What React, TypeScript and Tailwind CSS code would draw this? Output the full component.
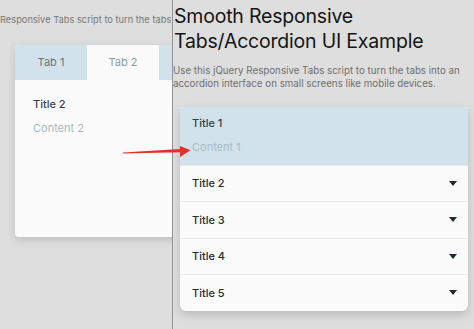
import { ReactNode } from 'react'

const font = { fontFamily: 'Inter, "Noto Sans", sans-serif' }

function Caret() {
  return (
    <svg width="8" height="5" viewBox="0 0 8 5" className="shrink-0">
      <path d="M0 0 L8 0 L4 5 Z" fill="#1b2a33" />
    </svg>
  )
}

function AccordionRow({ children }: { children: ReactNode }) {
  return (
    <div className="h-[36.5px] border-t border-[#e3e8ea] flex items-center justify-between pl-[12px] pr-[11px]">
      <span className="text-[11px] leading-[14px] font-medium text-[#262b2e]">{children}</span>
      <Caret />
    </div>
  )
}

export default function App() {
  return (
    <div className="relative w-[474px] h-[329px] bg-[#dedede] flex overflow-hidden" style={font}>
      <div className="w-[172px] shrink-0 overflow-hidden">
        <p className="mt-[12.5px] whitespace-nowrap text-[9.3px] leading-[13px] text-[#767676]">
          Responsive Tabs script to turn the tabs into an accordion
        </p>
        <div className="mt-[19.5px] ml-[15px] w-[260px] h-[192px] bg-[#fbfbfb] rounded-[4px] shadow-[0_3px_8px_rgba(0,0,0,0.15)] overflow-hidden">
          <div className="flex h-[35px] bg-[#d2e2ea] text-[11px]">
            <div className="w-[72px] flex items-center justify-center text-[#63767f]">Tab 1</div>
            <div className="w-[72px] flex items-center justify-center bg-[#fbfbfb] text-[#8c9ba2]">Tab 2</div>
          </div>
          <div className="pl-[18px] pt-[17px]">
            <p className="text-[11px] leading-[14px] font-medium text-[#37474f]">Title 2</p>
            <p className="mt-[10px] text-[11px] leading-[14px] text-[#a9b9c0]">Content 2</p>
          </div>
        </div>
      </div>

      <div className="w-px shrink-0 bg-[#949494]" />

      {/* mobile view */}
      <div className="flex-1 min-w-0">
        <h1 className="pt-[4px] pl-px text-[19.5px] leading-[25px] text-[#141414] tracking-[-0.2px] whitespace-nowrap">
          Smooth Responsive
          <br />
          Tabs/Accordion UI Example
        </h1>
        <p className="mt-[10px] text-[9.75px] leading-[13px] text-[#6e6e6e] whitespace-nowrap">
          Use this jQuery Responsive Tabs script to turn the tabs into an
          <br />
          accordion interface on small screens like mobile devices.
        </p>
        <div className="mt-[16.5px] ml-[7px] w-[288px] bg-[#fbfbfb] rounded-b-[6px] rounded-t-[3px] shadow-[0_4px_10px_rgba(0,0,0,0.16)] overflow-hidden">
          <div className="h-[58px] bg-[#d2e2ea] pl-[12px] pt-[9px]">
            <p className="text-[11px] leading-[14px] font-medium text-[#2f4149]">Title 1</p>
            <p className="mt-[10.5px] text-[11px] leading-[14px] text-[#a7bcc6]">Content 1</p>
          </div>
          <AccordionRow>Title 2</AccordionRow>
          <AccordionRow>Title 3</AccordionRow>
          <AccordionRow>Title 4</AccordionRow>
          <AccordionRow>Title 5</AccordionRow>
        </div>
      </div>

      {/* red annotation arrow */}
      <svg className="absolute left-0 top-0 pointer-events-none" width="474" height="329">
        <polygon
          points="123,152.4 180,149 180,146 190.5,150.3 180,157 180,152.2 123,153.6"
          fill="#e2322b"
        />
      </svg>
    </div>
  )
}
